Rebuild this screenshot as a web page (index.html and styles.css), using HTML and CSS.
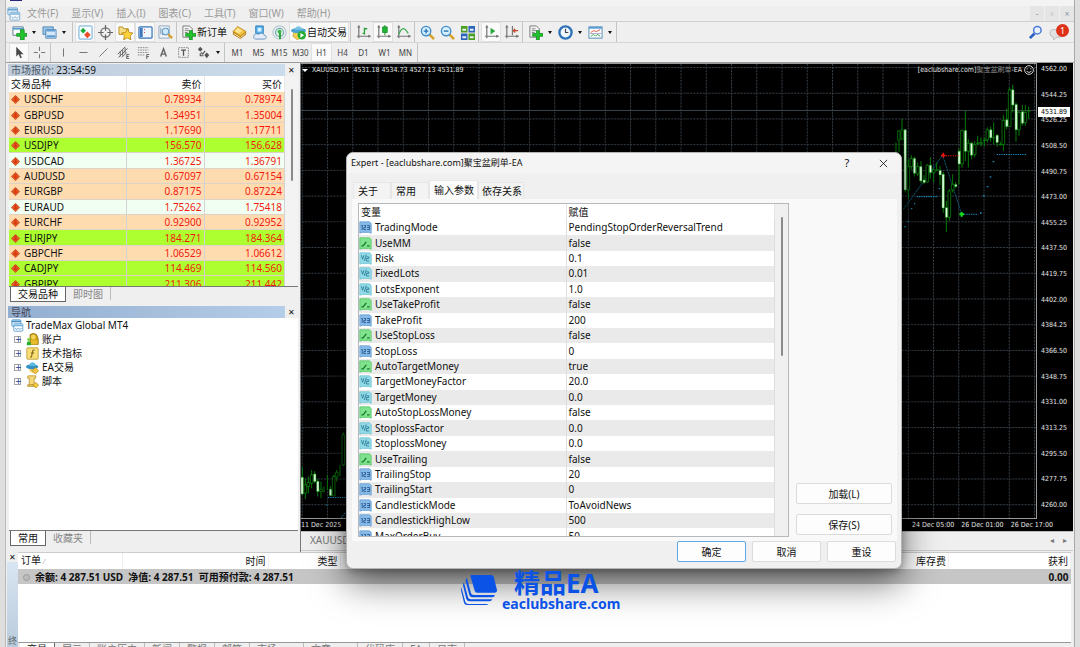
FILE: index.html
```html
<!DOCTYPE html>
<html lang="zh-CN">
<head>
<meta charset="utf-8">
<title>TradeMax Global MT4</title>
<link rel="stylesheet" href="styles.css">
</head>
<body>
<svg class="defs" aria-hidden="true">
  <defs>
    <symbol id="i-app" viewBox="0 0 16 16"><rect x="1" y="1" width="11" height="8" rx="1" fill="#dff0fb" stroke="#4a90c8"/><path d="M1 3h11" stroke="#4a90c8" stroke-width="2"/><rect x="3.500" y="6" width="11" height="9" rx="1" fill="#fff" stroke="#4a90c8"/><path d="M4 8h10" stroke="#6db3e4" stroke-width="2"/><path d="M5 11l2 2 2-2 2 2 2-2" stroke="#4a90c8" fill="none"/></symbol>
    <symbol id="i-newchart" viewBox="0 0 16 16"><path d="M1 2h11v9H1z" fill="#fff" stroke="#5a7d96"/><path d="M1 4h11" stroke="#5b9fd0" stroke-width="2"/><path d="M9 5h4v4h3v3h-3v4H9v-4H5V9h4z" fill="#22c42e" stroke="#128a1c" stroke-width=".8"/></symbol>
    <symbol id="i-windows" viewBox="0 0 16 16"><path d="M1 2h11v8H1z" fill="#9cc6e8" stroke="#4f88b5"/><path d="M4 5h11v9H4z" fill="#d5e8f7" stroke="#4f88b5"/><path d="M5 12h9M5 6h9" stroke="#5e9bd0" stroke-width="2"/></symbol>
    <symbol id="i-market" viewBox="0 0 16 16"><rect x="1" y="1" width="14" height="14" rx="1" fill="#f5fbff" stroke="#64a7d5"/><path d="M5.500 3l3 3-3 3-3-3z" fill="#1bab38"/><path d="M10 7l3.500 3.500L10 14l-3.500-3.500z" fill="#ec4c26"/></symbol>
    <symbol id="i-cross" viewBox="0 0 16 16"><circle cx="8" cy="8" r="5" fill="none" stroke="#666" stroke-width="1.300"/><path d="M8 0v6M8 10v6M0 8h6M10 8h6" stroke="#666" stroke-width="1.300"/></symbol>
    <symbol id="i-star" viewBox="0 0 16 16"><path d="M1 2h4l1 2h5v6H1z" fill="#f6dd85" stroke="#b48d25"/><path d="M10 4l2 4 4 .5-3 3 .8 4.300L10 13.700l-4 2 .8-4.200-3-3L8 8z" fill="#ffd23a" stroke="#a9790d" stroke-width=".8"/></symbol>
    <symbol id="i-panel" viewBox="0 0 16 16"><rect x="1" y="2" width="14" height="12" rx="1" fill="#eef6ff" stroke="#3975b5" stroke-width="1.300"/><path d="M2 3h3v10H2z" fill="#3c78bb"/><path d="M6.500 5h1M6.500 8h1" stroke="#c33"/></symbol>
    <symbol id="i-tester" viewBox="0 0 16 16"><path d="M1 1h11v13H1z" fill="#eef3f8" stroke="#90a8bc"/><path d="M3 3v7M5 5v6M10 3v6" stroke="#7a99b5"/><circle cx="8" cy="7" r="3.500" fill="#cfe8fa" stroke="#699dc6" stroke-width="1.200"/><path d="M11 10l4 4" stroke="#d79f2b" stroke-width="2.500"/></symbol>
    <symbol id="i-order" viewBox="0 0 16 16"><path d="M2 1h7l3 3v9H2z" fill="#f3f3f3" stroke="#777"/><path d="M4 4h4M4 6h5M4 8h3" stroke="#888"/><path d="M9 6h3v3h4v3h-4v4H9v-4H5V9h4z" fill="#22c42e" stroke="#128a1c" stroke-width=".8"/></symbol>
    <symbol id="i-meta" viewBox="0 0 16 16"><path d="M6 2l9 5v3l-6 5-8-5V7z" fill="#b97a10"/><path d="M6 1.500L15 7l-6 5-8-5z" fill="#f3c241" stroke="#a4700c" stroke-width=".6"/><path d="M6 3l5 3-4 3-4-2.500z" fill="#ffe492"/><path d="M2 9l7 4.500L14 9" fill="none" stroke="#fff2b8"/></symbol>
    <symbol id="i-signal" viewBox="0 0 16 16"><path d="M4 1h8v8H4z" fill="#58b4ee" stroke="#267db8"/><path d="M6 3h4v4H6z" fill="#d9f0fd"/><path d="M2 12c0-3 4-3 5-2 2-2 6-1 6 1 3 0 3 4 0 4H4c-2 0-3-2-2-3z" fill="#e3edf8" stroke="#6c93c4"/></symbol>
    <symbol id="i-radio" viewBox="0 0 16 16"><circle cx="8" cy="8" r="7" fill="none" stroke="#b7ccd4" stroke-width="1.300"/><circle cx="8" cy="8" r="4.300" fill="#d9efdc" stroke="#7bacb9" stroke-width="1.300"/><path d="M8.500 7v8" stroke="#2a9d3a" stroke-width="2"/><circle cx="8" cy="7" r="2" fill="#3ab44a"/></symbol>
    <symbol id="i-auto" viewBox="0 0 16 16"><path d="M3 7l9-1 1 5-6 5-5-4z" fill="#f4cd52" stroke="#b48a1e" stroke-width=".6"/><ellipse cx="8" cy="6" rx="8" ry="2.800" fill="#4aa3d0"/><path d="M4 5c0-5 8-5 8 0z" fill="#79c5e6"/><circle cx="11.500" cy="11" r="4.500" fill="#27ad35"/><path d="M10 8.500v5l4-2.500z" fill="#fff"/></symbol>
    <symbol id="i-ea" viewBox="0 0 16 16"><path d="M4 8h8v4l-4 3-4-3z" fill="#f1ce68"/><ellipse cx="7.500" cy="7" rx="7.500" ry="3" fill="#348fc2"/><path d="M4 6c0-6 8-6 8 0z" fill="#5bb9e2"/><path d="M11.500 8l4 4-4 4-4-4z" fill="#f2c63e" stroke="#a98016" stroke-width=".8"/></symbol>
    <symbol id="i-bars" viewBox="0 0 16 16"><path d="M3 1v13M1 12h14M2 3l1-2 1 2M13 11l2 1-2 1" fill="none" stroke="#777" stroke-width="1.300"/><path d="M9 3v7M9 4h3M7 9h2" stroke="#27a33a" stroke-width="1.400"/></symbol>
    <symbol id="i-candles" viewBox="0 0 16 16"><path d="M3 1v13M1 12h14M2 3l1-2 1 2M13 11l2 1-2 1" fill="none" stroke="#777" stroke-width="1.300"/><path d="M9.500 0v11" stroke="#128a25"/><path d="M7 2h5v6H7z" fill="#1fb632" stroke="#128a25" stroke-width=".8"/></symbol>
    <symbol id="i-line" viewBox="0 0 16 16"><path d="M3 1v13M1 12h14M2 3l1-2 1 2M13 11l2 1-2 1" fill="none" stroke="#777" stroke-width="1.300"/><path d="M3 10c3-8 6-8 10-1" fill="none" stroke="#41ad51" stroke-width="1.400"/></symbol>
    <symbol id="i-zoomin" viewBox="0 0 16 16"><path d="M10 10l5 5" stroke="#d5a32c" stroke-width="2.800"/><circle cx="6.500" cy="6.500" r="5" fill="#d7efff" stroke="#3f8dcd" stroke-width="1.500"/><path d="M4 6.500h5M6.500 4v5" stroke="#2877bb" stroke-width="1.500"/></symbol>
    <symbol id="i-zoomout" viewBox="0 0 16 16"><path d="M10 10l5 5" stroke="#d5a32c" stroke-width="2.800"/><circle cx="6.500" cy="6.500" r="5" fill="#d7efff" stroke="#3f8dcd" stroke-width="1.500"/><path d="M4 6.500h5" stroke="#2877bb" stroke-width="1.500"/></symbol>
    <symbol id="i-tile" viewBox="0 0 16 16"><path d="M1 1h7v7H1zM9 9h7v7H9z" fill="#4c9e20"/><path d="M9 1h7v7H9zM1 9h7v7H1z" fill="#2e64ba"/><path d="M2.500 4h4v2h-4zM10.500 4h4v2h-4zM2.500 12h4v2h-4zM10.500 12h4v2h-4z" fill="#e7f1f8"/></symbol>
    <symbol id="i-scroll" viewBox="0 0 16 16"><path d="M3 1v13M1 12h14M2 3l1-2 1 2M13 11l2 1-2 1" fill="none" stroke="#777" stroke-width="1.300"/><path d="M7 3v7l5-3.500z" fill="#28a83b"/></symbol>
    <symbol id="i-shift" viewBox="0 0 16 16"><path d="M3 1v13M1 12h14M2 3l1-2 1 2M13 11l2 1-2 1M9 1v10" fill="none" stroke="#777" stroke-width="1.300"/><path d="M15 6h-5M12 4l-2 2 2 2" fill="none" stroke="#c6482a" stroke-width="1.300"/></symbol>
    <symbol id="i-clock" viewBox="0 0 16 16"><circle cx="8" cy="8" r="6.500" fill="#edf6fd" stroke="#2d72b8" stroke-width="2.500"/><path d="M8 4v4h3" fill="none" stroke="#444" stroke-width="1.200"/></symbol>
    <symbol id="i-template" viewBox="0 0 16 16"><rect x="1" y="2" width="14" height="12" fill="#fff" stroke="#5087b6"/><path d="M1 3h14" stroke="#5d9fd6" stroke-width="2"/><path d="M3 8l3-2 3 1 4-2" fill="none" stroke="#d05442"/><path d="M3 12l3-2 2 2 2-2 3 2" fill="none" stroke="#38a04a"/><path d="M2 9h12" stroke="#aac"/></symbol>
    <symbol id="i-pointer" viewBox="0 0 16 16"><path d="M4 1v12l3-3 2 5 2-1-2-4h4z" fill="#4a4a4a"/></symbol>
    <symbol id="i-plus" viewBox="0 0 16 16"><path d="M8 1v5M8 10v5M1 8h5M10 8h5" stroke="#777" stroke-width="1.300"/></symbol>
    <symbol id="i-vline" viewBox="0 0 16 16"><path d="M8 3v10" stroke="#777" stroke-width="1.300"/></symbol>
    <symbol id="i-hline" viewBox="0 0 16 16"><path d="M3 8h10" stroke="#777" stroke-width="1.300"/></symbol>
    <symbol id="i-trend" viewBox="0 0 16 16"><path d="M3 13L13 3" stroke="#777" stroke-width="1.200"/></symbol>
    <symbol id="i-channel" viewBox="0 0 16 16"><path d="M1 10L10 1M2 14L13 3M6 14l6-6M4 6v7M7 4v8M10 2v7" fill="none" stroke="#666" stroke-width="1.200"/><path d="M15 10.500h-3v5h3M12 13h2.500" fill="none" stroke="#444"/></symbol>
    <symbol id="i-fibo" viewBox="0 0 16 16"><path d="M1 2h13M1 5h13M1 8h13M1 11h9" stroke="#777" stroke-dasharray="2 1"/><path d="M15 10.500h-3V16M12 13h2.500" fill="none" stroke="#444"/></symbol>
    <symbol id="i-text" viewBox="0 0 16 16"><path d="M4.500 13L8 3.500 11.500 13M5.700 10h4.600" fill="none" stroke="#666" stroke-width="1.800"/></symbol>
    <symbol id="i-label" viewBox="0 0 16 16"><rect x="2" y="2" width="12" height="12" fill="none" stroke="#777" stroke-dasharray="2 1"/><path d="M5 5h6M8 5v7" stroke="#555" stroke-width="1.600"/></symbol>
    <symbol id="i-arrows" viewBox="0 0 16 16"><path d="M1 4l3-3 3 3-3 3zM9 11l3-3 3 3-3 4z" fill="#555"/><path d="M5 8l2 2 3-4M4 9v3h4" fill="none" stroke="#555" stroke-width="1.400"/></symbol>
    <symbol id="i-down" viewBox="0 0 16 16"><path d="M8 0l8 8-8 8-8-8z" fill="#c9501f"/><path d="M8 2l6 6-6 6-6-6z" fill="#ee6a35"/><path d="M6 3h4v5h3l-5 5-5-5h3z" fill="#d93a10"/></symbol>
    <symbol id="i-accounts" viewBox="0 0 16 16"><path d="M5 2q4-3 8 0l2 5v7H5z" fill="#d4a514" stroke="#8b6b0c"/><circle cx="9" cy="5" r="3" fill="#f4d55c"/><path d="M6 14V9h8v5z" fill="#e6bd30"/><circle cx="3.500" cy="8" r="2" fill="#73cf3d"/><path d="M1 15v-3q2-4 5 0v3z" fill="#28ae29"/></symbol>
    <symbol id="i-func" viewBox="0 0 16 16"><rect x="1" y="1" width="14" height="14" rx="1" fill="#f8df76" stroke="#b79531"/><path d="M10.500 4q-2-1-2.500 2l-1 5q0 2-2 1M6 7.500h4" fill="none" stroke="#806214" stroke-width="1.300"/></symbol>
    <symbol id="i-script" viewBox="0 0 16 16"><path d="M2 2q0-1 1-1h9v3h-2v8H4V4H2z" fill="#f5d878" stroke="#b79437"/><path d="M2 12h9v2H2z" fill="#e9c456" stroke="#b79437"/><path d="M12 9l3.500 3.500L12 16l-3.500-3.500z" fill="#f3ca3a" stroke="#a98016" stroke-width=".8"/></symbol>
    <symbol id="i-int" viewBox="0 0 16 16"><path d="M1 1h12l2 2v12l-3-1H4l-3 1z" fill="#86bbe9" stroke="#6a9fd0"/><path d="M3 6l1-1v6M6 5.500h2V8H6v2.500h2.500M10 5.500h3v5h-3M10 8h3" fill="none" stroke="#2f5f95" stroke-width="1.200"/></symbol>
    <symbol id="i-bool" viewBox="0 0 16 16"><path d="M1 1h12l2 2v12l-3-1H4l-3 1z" fill="#7fe28c" stroke="#5cc66b"/><path d="M3 11h2l4-5M10 11h3" fill="none" stroke="#167329" stroke-width="1.500"/></symbol>
    <symbol id="i-dbl" viewBox="0 0 16 16"><path d="M1 1h12l2 2v12l-3-1H4l-3 1z" fill="#93dbe8" stroke="#74c3d2"/><path d="M3 4l1.500 5L6 4M9 3L6.500 11M9 6h3v2H9v3h3.500" fill="none" stroke="#2c7e96" stroke-width="1.100"/></symbol>
  </defs>
</svg>

<div class="app">
  <div class="titlebar"><span class="title-mark"></span></div>
  <nav class="menubar">
    <svg class="ic menu-logo"><use href="#i-app"/></svg>
    <button>文件(F)</button><button>显示(V)</button><button>插入(I)</button><button>图表(C)</button><button>工具(T)</button><button>窗口(W)</button><button>帮助(H)</button>
    <div class="mdi"><button aria-label="最小化">-</button><button aria-label="还原">▫</button><button aria-label="关闭">×</button></div>
  </nav>

  <div class="tools">
    <div class="toolbar">
      <div class="group first">
        <button class="tb"><svg class="ic"><use href="#i-newchart"/></svg></button><button class="dd" aria-label="更多"></button>
        <button class="tb"><svg class="ic"><use href="#i-windows"/></svg></button><button class="dd" aria-label="更多"></button>
      </div>
      <div class="group">
        <button class="tb on"><svg class="ic"><use href="#i-market"/></svg></button>
        <button class="tb"><svg class="ic"><use href="#i-cross"/></svg></button>
        <button class="tb on"><svg class="ic"><use href="#i-star"/></svg></button>
        <button class="tb on"><svg class="ic"><use href="#i-panel"/></svg></button>
        <button class="tb"><svg class="ic"><use href="#i-tester"/></svg></button>
      </div>
      <div class="group">
        <button class="tb wide"><svg class="ic"><use href="#i-order"/></svg>新订单</button>
        <button class="tb"><svg class="ic"><use href="#i-meta"/></svg></button>
        <button class="tb"><svg class="ic"><use href="#i-signal"/></svg></button>
        <button class="tb"><svg class="ic"><use href="#i-radio"/></svg></button>
        <button class="tb wide on"><svg class="ic"><use href="#i-auto"/></svg>自动交易</button>
      </div>
      <div class="group">
        <button class="tb"><svg class="ic"><use href="#i-bars"/></svg></button>
        <button class="tb on"><svg class="ic"><use href="#i-candles"/></svg></button>
        <button class="tb"><svg class="ic"><use href="#i-line"/></svg></button>
      </div>
      <div class="group">
        <button class="tb"><svg class="ic"><use href="#i-zoomin"/></svg></button>
        <button class="tb"><svg class="ic"><use href="#i-zoomout"/></svg></button>
        <button class="tb"><svg class="ic"><use href="#i-tile"/></svg></button>
      </div>
      <div class="group">
        <button class="tb on"><svg class="ic"><use href="#i-scroll"/></svg></button>
        <button class="tb"><svg class="ic"><use href="#i-shift"/></svg></button>
      </div>
      <div class="group last">
        <button class="tb"><svg class="ic"><use href="#i-order"/></svg></button><button class="dd" aria-label="更多"></button>
        <button class="tb"><svg class="ic"><use href="#i-clock"/></svg></button><button class="dd" aria-label="更多"></button>
        <button class="tb"><svg class="ic"><use href="#i-template"/></svg></button><button class="dd" aria-label="更多"></button>
      </div>
      <div class="right-tools">
        <button class="tb" aria-label="搜索"><svg class="ic" viewBox="0 0 16 16"><path d="M7 9l-5 5" stroke="#2e5fc4" stroke-width="3"/><circle cx="10" cy="5.500" r="4" fill="#eaf3ff" stroke="#4c7cd6" stroke-width="1.600"/></svg></button>
        <button class="tb bell" aria-label="通知"><svg class="ic" viewBox="0 0 16 16"><path d="M3 5h9q3 0 3 4t-4 4H8l-3 3v-3q-4-1-4-4t2-4z" fill="#e2e2e2" stroke="#bbb"/></svg><span class="badge">1</span></button>
      </div>
    </div>
    <div class="toolbar second">
      <div class="group">
        <button class="tb on"><svg class="ic"><use href="#i-pointer"/></svg></button>
        <button class="tb"><svg class="ic"><use href="#i-plus"/></svg></button>
      </div>
      <div class="group">
        <button class="tb"><svg class="ic"><use href="#i-vline"/></svg></button>
        <button class="tb"><svg class="ic"><use href="#i-hline"/></svg></button>
        <button class="tb"><svg class="ic"><use href="#i-trend"/></svg></button>
        <button class="tb"><svg class="ic"><use href="#i-channel"/></svg></button>
        <button class="tb"><svg class="ic"><use href="#i-fibo"/></svg></button>
        <button class="tb"><svg class="ic"><use href="#i-text"/></svg></button>
        <button class="tb"><svg class="ic"><use href="#i-label"/></svg></button>
        <button class="tb"><svg class="ic"><use href="#i-arrows"/></svg></button><button class="dd" aria-label="更多"></button>
      </div>
      <div class="group periods">
        <button class="tb">M1</button><button class="tb">M5</button><button class="tb">M15</button><button class="tb">M30</button><button class="tb on">H1</button><button class="tb">H4</button><button class="tb">D1</button><button class="tb">W1</button><button class="tb">MN</button>
      </div>
    </div>
  </div>

  <main class="work">
    <aside class="side">
      <section class="market">
        <header class="pane-head"><span>市场报价: <b>23:54:59</b></span><button aria-label="关闭">✕</button></header>
        <div class="market-body">
          <table class="quotes">
            <colgroup><col class="q-name"><col class="q-sell"><col></colgroup>
            <thead><tr><th>交易品种</th><th>卖价</th><th>买价</th></tr></thead>
            <tbody>
              <tr><td><svg class="arr"><use href="#i-down"/></svg>USDCHF</td><td>0.78934</td><td>0.78974</td></tr>
              <tr><td><svg class="arr"><use href="#i-down"/></svg>GBPUSD</td><td>1.34951</td><td>1.35004</td></tr>
              <tr><td><svg class="arr"><use href="#i-down"/></svg>EURUSD</td><td>1.17690</td><td>1.17711</td></tr>
              <tr class="lime"><td><svg class="arr"><use href="#i-down"/></svg>USDJPY</td><td>156.570</td><td>156.628</td></tr>
              <tr class="mint"><td><svg class="arr"><use href="#i-down"/></svg>USDCAD</td><td>1.36725</td><td>1.36791</td></tr>
              <tr><td><svg class="arr"><use href="#i-down"/></svg>AUDUSD</td><td>0.67097</td><td>0.67154</td></tr>
              <tr><td><svg class="arr"><use href="#i-down"/></svg>EURGBP</td><td>0.87175</td><td>0.87224</td></tr>
              <tr class="mint"><td><svg class="arr"><use href="#i-down"/></svg>EURAUD</td><td>1.75262</td><td>1.75418</td></tr>
              <tr><td><svg class="arr"><use href="#i-down"/></svg>EURCHF</td><td>0.92900</td><td>0.92952</td></tr>
              <tr class="lime"><td><svg class="arr"><use href="#i-down"/></svg>EURJPY</td><td>184.271</td><td>184.364</td></tr>
              <tr><td><svg class="arr"><use href="#i-down"/></svg>GBPCHF</td><td>1.06529</td><td>1.06612</td></tr>
              <tr class="lime"><td><svg class="arr"><use href="#i-down"/></svg>CADJPY</td><td>114.469</td><td>114.560</td></tr>
              <tr class="lime"><td><svg class="arr"><use href="#i-down"/></svg>GBPJPY</td><td>211.306</td><td>211.442</td></tr>
            </tbody>
          </table>
          <div class="thumb-track"><i class="thumb"></i></div>
        </div>
        <div class="tabs"><button class="active">交易品种</button><button>即时图</button></div>
      </section>
      <section class="navigator">
        <header class="pane-head deep"><span>导航</span><button aria-label="关闭">✕</button></header>
        <div class="tree">
          <div class="node root"><svg class="ic"><use href="#i-app"/></svg>TradeMax Global MT4</div>
          <div class="node"><i class="exp">+</i><svg class="ic"><use href="#i-accounts"/></svg>账户</div>
          <div class="node"><i class="exp">+</i><svg class="ic"><use href="#i-func"/></svg>技术指标</div>
          <div class="node"><i class="exp">+</i><svg class="ic"><use href="#i-ea"/></svg>EA交易</div>
          <div class="node"><i class="exp">+</i><svg class="ic"><use href="#i-script"/></svg>脚本</div>
        </div>
        <div class="tabs"><button class="active">常用</button><button>收藏夹</button></div>
      </section>
    </aside>

    <section class="chart-pane">
      <div class="chart">
        <div class="plot">
          <svg class="plot-svg" viewBox="301 65 735 453" preserveAspectRatio="none">
            <defs>
              <pattern id="grid" patternUnits="userSpaceOnUse" x="327" y="68" width="25.250" height="25.660">
                <path d="M.5 0V25.660M0 .5H25.250" stroke="#39434c" stroke-width="1" stroke-dasharray="2 1.200" fill="none"/>
              </pattern>
            </defs>
            <rect x="301" y="64" width="738" height="456" fill="url(#grid)"/>
            <path d="M301 111.500h738" stroke="#36444a"/>
            <g transform="translate(890 60) scale(.33333)" stroke-width="3" fill="none">
              <path d="M40 450L158 288L215 465" stroke="#0d5064" stroke-width="3" stroke-dasharray="7 2"/>
              <path stroke="#067d08" d="M18 250v30M27 215v65M36 180v60M46 210v190M55 300v118M64 288v42M73 292v60M83 310v40M93 305v66M102 348v27M112 315v55M121 294v64M131 328v42M140 310v26M150 320v58M160 338v122M169 425v93M178 390v95M188 345v55M197 368v18M207 268v107M216 212v113M226 155v150M235 240v85M245 248v52M254 246v48M263 230v28M273 235v27M283 235v27M292 205v45M302 203v44M311 190v65M321 225v38M331 248v12M340 168v107M350 148v62M359 85v117M368 77v83M378 130v118M387 155v75M397 138v62M406 138v62M416 142v36M411 156h10M136 332h10M258 252h10M279 244h10M306 236h10M326 256h10"/>
              <path fill="#000" stroke="#079b0c" stroke-width="2" d="M23 215h7v28h-7zM33 212h7v28h-7zM51 322h8v70h-8zM60 298h8v24h-8zM79 322h8v22h-8zM108 318h8v50h-8zM127 332h8v8h-8zM174 395h8v79h-8zM184 375h8v17h-8zM212 214h8v100h-8zM231 252h8v24h-8zM250 256h8v30h-8zM269 250h8v4h-8zM288 212h8v30h-8zM336 184h8v72h-8zM355 92h8v110h-8zM383 160h8v52h-8zM402 160h8v30h-8z"/>
              <path fill="#e3ffe3" stroke="#0c970e" stroke-width="1.500" d="M42 212h7v180h-7zM70 298h7v44h-7zM89 322h7v43h-7zM99 362h7v8h-7zM118 318h7v22h-7zM147 334h7v13h-7zM156 345h7v101h-7zM166 445h7v29h-7zM194 376h7v6h-7zM204 276h7v38h-7zM223 214h7v62h-7zM241 252h7v36h-7zM299 212h7v24h-7zM318 228h7v22h-7zM347 182h7v20h-7zM365 92h7v46h-7zM375 136h7v76h-7zM394 158h7v34h-7z"/>
              <path d="M160 290h48" stroke="#e01010" stroke-dasharray="4 3"/>
              <path d="M160 281v14M153 289h14" stroke="#f01212" stroke-width="5"/>
              <path d="M80 412h64M215 465h50M320 286h88" stroke="#168dbb" stroke-dasharray="4 3"/>
              <path d="M43 502h5M53 486h4M63 448h4M72 433h4M146 388h4M270 461h5M279 409h5M290 382h5M299 353h5M308 307h5" stroke="#168dbb" stroke-width="4"/>
              <path d="M215 458v14M208 465h14" stroke="#11e21b" stroke-width="6"/>
            </g>
            <g transform="translate(300 420) scale(.33333)" stroke-width="3" fill="none">
              <path stroke="#067d08" d="M7 142v83M16 175v62M25 170v50M35 150v55M44 153v37M53 178v52M63 185v50M72 200v18M82 165v45M91 198v30M101 165v63M110 150v35M120 135v35M130 38v100"/>
              <path fill="#000" stroke="#079b0c" stroke-width="2" d="M12 195h8v25h-8zM21 188h8v12h-8zM31 165h8v25h-8zM59 208h8v7h-8zM97 170h8v58h-8zM106 157h8v14h-8zM126 45h8v90h-8z"/>
              <path fill="#e3ffe3" stroke="#0c970e" stroke-width="1.500" d="M3 172h7v50H3zM41 162h7v23h-7zM50 184h7v31h-7zM88 208h7v19h-7z"/>
              <path d="M84 233h54M78 255h6M124 294l12-18" stroke="#168dbb" stroke-dasharray="4 3"/>
            </g>
          </svg>
          <div class="plot-head"><span class="symbol">XAUUSD,H1&nbsp; 4531.18 4534.73 4527.13 4531.89</span><span class="expert-name">[eaclubshare.com]<span class="dim">聚宝盆刷单</span>-EA <svg class="smile" viewBox="0 0 16 16"><circle cx="8" cy="8" r="7" fill="none" stroke="#ddd" stroke-width="1.500"/><path d="M5 5v2M11 5v2M4 10q4 4 8 0" fill="none" stroke="#ddd" stroke-width="1.500"/></svg></span></div>
        </div>
        <div class="prices">
          <span>4562.00</span><span>4544.25</span><span>4526.25</span><span>4508.50</span><span>4490.75</span><span>4473.00</span><span>4455.25</span><span>4437.50</span><span>4419.75</span><span>4402.00</span><span>4384.25</span><span>4366.50</span><span>4348.75</span><span>4331.00</span><span>4313.25</span><span>4295.50</span><span>4277.75</span><span>4260.00</span>
          <b class="price-now">4531.89</b>
        </div>
        <div class="dates"><span>11 Dec 2025</span><span class="push">24 Dec 05:00</span><span>26 Dec 01:00</span><span>26 Dec 17:00</span></div>
      </div>
      <div class="chart-tabs"><button>XAUUSD,H1</button><span class="scroll-arrows"><i>◂</i><i>▸</i></span></div>
    </section>
  </main>

  <section class="terminal">
    <div class="term-strip"><button aria-label="关闭">✕</button><span>终端</span></div>
    <div class="term-main">
      <table class="orders">
        <colgroup><col class="o-id"><col class="o-time"><col class="o-type"><col><col class="o-swap"><col class="o-profit"></colgroup>
        <thead><tr><th class="l">订单 <small>⁄</small></th><th>时间</th><th>类型</th><th></th><th>库存费</th><th>获利</th></tr></thead>
        <tbody><tr><td colspan="5" class="l"><i class="dot"></i>余额: 4 287.51 USD&nbsp; 净值: 4 287.51&nbsp; 可用预付款: 4 287.51</td><td>0.00</td></tr></tbody>
      </table>
      <div class="term-tabs"><button class="active">交易</button><button>展示</button><button>账户历史</button><button>新闻</button><button>警报</button><button>邮箱</button><button class="counted">市场</button><button class="counted">文章</button><button>代码库</button><button>EA</button><button>日志</button></div>
    </div>
  </section>
</div>

<div class="watermark">
  <svg class="wm-logo" viewBox="0 0 108 90"><path d="M30 0h61q5 0 7 5l10 40q1 6-6 8H48q-5 0-7-6L29 5q-1-5 1-5z"/><path d="M18 10l12 45q2 5 8 5h64q-2 7-8 7H34q-7 0-9-7L14 18q-1-7 4-8z"/><path d="M9 23l12 44q2 6 8 6h65q-3 6-8 6H26q-8 0-10-7L6 31q-1-6 3-8z"/><path d="M1 37l12 44q3 6 9 6h60q-2 3-7 3H18q-7 0-9-7L0 46z"/></svg>
  <div class="wm-text"><strong>精品EA</strong><span>eaclubshare.com</span></div>
</div>

<div class="dialog" role="dialog" aria-label="Expert">
  <header class="dlg-head"><span>Expert - [eaclubshare.com]聚宝盆刷单-EA</span><button aria-label="帮助">?</button><button aria-label="关闭"><svg class="x" viewBox="0 0 10 10"><path d="M1 1l8 8M9 1L1 9" stroke="#222" stroke-width="1"/></svg></button></header>
  <div class="dlg-tabs"><button>关于</button><button>常用</button><button class="active">输入参数</button><button>依存关系</button></div>
  <div class="dlg-page">
    <div class="params-box">
      <table class="params">
        <colgroup><col class="p-name"><col></colgroup>
        <thead><tr><th>变量</th><th>赋值</th></tr></thead>
        <tbody>
          <tr><td><svg class="ty"><use href="#i-int"/></svg>TradingMode</td><td>PendingStopOrderReversalTrend</td></tr>
          <tr><td><svg class="ty"><use href="#i-bool"/></svg>UseMM</td><td>false</td></tr>
          <tr><td><svg class="ty"><use href="#i-dbl"/></svg>Risk</td><td>0.1</td></tr>
          <tr><td><svg class="ty"><use href="#i-dbl"/></svg>FixedLots</td><td>0.01</td></tr>
          <tr><td><svg class="ty"><use href="#i-dbl"/></svg>LotsExponent</td><td>1.0</td></tr>
          <tr><td><svg class="ty"><use href="#i-bool"/></svg>UseTakeProfit</td><td>false</td></tr>
          <tr><td><svg class="ty"><use href="#i-int"/></svg>TakeProfit</td><td>200</td></tr>
          <tr><td><svg class="ty"><use href="#i-bool"/></svg>UseStopLoss</td><td>false</td></tr>
          <tr><td><svg class="ty"><use href="#i-int"/></svg>StopLoss</td><td>0</td></tr>
          <tr><td><svg class="ty"><use href="#i-bool"/></svg>AutoTargetMoney</td><td>true</td></tr>
          <tr><td><svg class="ty"><use href="#i-dbl"/></svg>TargetMoneyFactor</td><td>20.0</td></tr>
          <tr><td><svg class="ty"><use href="#i-dbl"/></svg>TargetMoney</td><td>0.0</td></tr>
          <tr><td><svg class="ty"><use href="#i-bool"/></svg>AutoStopLossMoney</td><td>false</td></tr>
          <tr><td><svg class="ty"><use href="#i-dbl"/></svg>StoplossFactor</td><td>0.0</td></tr>
          <tr><td><svg class="ty"><use href="#i-dbl"/></svg>StoplossMoney</td><td>0.0</td></tr>
          <tr><td><svg class="ty"><use href="#i-bool"/></svg>UseTrailing</td><td>false</td></tr>
          <tr><td><svg class="ty"><use href="#i-int"/></svg>TrailingStop</td><td>20</td></tr>
          <tr><td><svg class="ty"><use href="#i-int"/></svg>TrailingStart</td><td>0</td></tr>
          <tr><td><svg class="ty"><use href="#i-int"/></svg>CandlestickMode</td><td>ToAvoidNews</td></tr>
          <tr><td><svg class="ty"><use href="#i-int"/></svg>CandlestickHighLow</td><td>500</td></tr>
          <tr><td><svg class="ty"><use href="#i-int"/></svg>MaxOrderBuy</td><td>50</td></tr>
        </tbody>
      </table>
      <div class="thumb-track grey"><i class="thumb long"></i></div>
    </div>
    <div class="dlg-side"><button class="btn">加载(L)</button><button class="btn">保存(S)</button></div>
  </div>
  <footer class="dlg-foot"><button class="btn primary">确定</button><button class="btn">取消</button><button class="btn">重设</button></footer>
</div>
</body>
</html>
```

FILE: styles.css
```css
* { box-sizing: border-box; }
html, body { height: 100%; }
body {
  margin: 0;
  overflow: hidden;
  background: #dedede;
  font: 10px/14px "Noto Sans", "Noto Sans CJK SC", sans-serif;
  color: #111;
}
button {
  font: inherit;
  color: inherit;
  background: none;
  border: 0;
  padding: 0;
  white-space: nowrap;
}
table { border-collapse: collapse; table-layout: fixed; }
th { font-weight: 400; }
th, td { padding: 0; line-height: 14px; white-space: nowrap; }
.defs { position: absolute; width: 0; height: 0; }
.ic { width: 15px; height: 15px; flex: none; display: block; }

.app {
  height: 100%;
  margin: 0 5px 0 5px;
  border-left: 1px solid #b9b9b9;
  border-right: 1px solid #a8a8a8;
  background: #efefef;
  display: grid;
  grid-template-rows: 6px 15px 42px minmax(0, 1fr) 95px;
}
.titlebar { background: #f3f3f3; padding-left: 4px; }
.title-mark { display: block; width: 12px; height: 1px; background: #26267a; }

.menubar { display: flex; align-items: center; padding-left: 1px; color: #9a9a9a; line-height: 15px; }
.menu-logo { width: 14px; height: 14px; opacity: .8; margin-right: 6px; }
.menubar > button { margin-right: 13px; }
.mdi { margin-left: auto; display: flex; gap: 1px; align-self: stretch; font-size: 8px; color: #8a96a5; }
.mdi button { width: 14px; background: #e5e5e5; }

.tools { border-top: 1px solid #cfcfcf; border-bottom: 1px solid #9b9b9b; background: #efefef; }
.toolbar { display: flex; height: 20px; padding-left: 2px; }
.second { border-top: 1px solid #d6d6d6; }
.group { display: flex; align-items: stretch; border-right: 1px solid #c4c4c4; padding: 0 1px; margin-right: 1px; }
.group.first { padding: 0 3px 0 1px; }
.tb { width: 20px; display: flex; align-items: center; justify-content: center; }
.tb.on { background: #fafafa; box-shadow: inset 0 0 0 1px #e0e0e0; }
.tb.wide { width: auto; padding: 0 2px; gap: 1px; }
.dd { width: 10px; display: flex; align-items: center; justify-content: center; }
.dd::after { content: ""; border: 2px solid transparent; border-top: 3px solid #111; border-bottom: 0; }
.right-tools { margin-left: auto; display: flex; gap: 1px; padding-right: 8px; }
.bell { position: relative; }
.badge {
  position: absolute; left: 10px; top: 2px;
  width: 13px; height: 13px; border-radius: 50%;
  background: #dd3217; color: #fff; font-size: 9px; line-height: 13px; text-align: center;
}
.periods { font-size: 8px; color: #444; }
.periods .tb { width: 21px; }
.second .ic { width: 13px; height: 13px; }

.work { display: grid; grid-template-columns: 294px minmax(0, 1fr); min-height: 0; }
.side { display: flex; flex-direction: column; min-height: 0; padding: 1px 2px 6px 2px; }
.market, .navigator { display: flex; flex-direction: column; min-height: 0; }
.market { flex: none; margin-bottom: 4px; }
.navigator { flex: 1; }
.pane-head { display: flex; height: 12px; line-height: 12px; color: #4a5a6a; }
.pane-head span { flex: 1; padding-left: 3px; background: linear-gradient(90deg, #c0ccda, #cbdcec); overflow: hidden; }
.pane-head.deep span { background: linear-gradient(90deg, #93aecf, #b4cde8); color: #445; }
.pane-head b { font-weight: 400; color: #111; }
.pane-head button { width: 13px; font-size: 8px; color: #111; }
.market-body { display: flex; height: 211px; overflow: hidden; border-bottom: 1px solid #777; background: #fff; margin-left: 1px; }
.quotes { flex: 1; height: 216px; align-self: flex-start; }
.q-name { width: 117px; }
.q-sell { width: 78px; }
.quotes th { text-align: right; padding-right: 2px; height: 16px; border-right: 1px solid #e8e8e8; }
.quotes th:first-child { text-align: left; padding-left: 2px; }
.quotes td { text-align: right; padding-right: 2px; color: #f21a10; background: #ffdcb0; border-right: 1px solid #d3d3d3; border-bottom: 1px solid #dcd2c8; }
.quotes td:first-child { text-align: left; color: #111; padding-left: 2px; }
.quotes .lime td { background: #adff2f; }
.quotes .mint td { background: #f0fff2; }
.arr { width: 9px; height: 9px; margin-right: 4px; vertical-align: -1px; }
.thumb-track { width: 13px; background: #f3f3f3; padding-top: 13px; display: flex; justify-content: center; }
.thumb { width: 2px; height: 92px; background: #8a8a8a; border-radius: 1px; }
.thumb.long { height: 139px; }
.tabs { display: flex; height: 15px; padding-left: 2px; color: #888; }
.tabs button { padding: 0 7px; border-right: 1px solid #bbb; margin-bottom: 2px; }
.tabs .active { color: #111; background: #fff; border: 1px solid #666; border-top: 0; margin-bottom: 0; }
.tree { flex: 1; background: #fff; border-bottom: 1px solid #777; margin: 0 0 0 1px; padding-top: 1px; }
.node { display: flex; align-items: center; gap: 3px; height: 14px; padding-left: 5px; line-height: 13px; }
.node .exp { margin-right: 2px; }
.node.root { padding-left: 2px; gap: 2px; height: 13px; }
.node .ic { width: 13px; height: 13px; }
.exp { width: 7px; height: 7px; border: 1px solid #a5a5a5; background: #fff; font: 8px/5px "DejaVu Sans", sans-serif; text-align: center; color: #223a90; }

.chart-pane { display: flex; flex-direction: column; min-width: 0; margin-right: 1px; border-left: 1px solid #777; }
.chart {
  flex: 1;
  min-height: 0;
  background: #000;
  color: #e4e4e4;
  display: grid;
  grid-template: minmax(0, 1fr) 12px / minmax(0, 1fr) 36px;
  font: 7px/12px "DejaVu Sans Condensed", "DejaVu Sans", "Noto Sans CJK SC", sans-serif;
}
.plot { position: relative; border: 1px solid #999; border-left: 0; min-height: 0; }
.plot-svg { position: absolute; inset: 0; width: 100%; height: 100%; }
.plot-head { position: relative; display: flex; justify-content: space-between; padding: 0 2px 0 1px; }
.symbol { display: flex; align-items: center; gap: 4px; }
.symbol::before { content: ""; border: 3px solid transparent; border-top-color: #fff; border-bottom: 0; }
.expert-name { display: flex; align-items: center; white-space: pre; }
.dim { color: #888; }
.smile { width: 10px; height: 10px; }
.prices { position: relative; display: flex; flex-direction: column; justify-content: space-between; padding-left: 4px; margin-bottom: 8px; }
.price-now { position: absolute; left: 1px; right: 3px; top: 44px; line-height: 10px; background: #fff; color: #000; padding-left: 3px; font-weight: 400; }
.dates { grid-column: 1 / -1; display: flex; gap: 7px; padding-right: 20px; white-space: nowrap; }
.push { margin-left: auto; }
.chart-tabs { height: 20px; display: flex; align-items: flex-start; justify-content: space-between; color: #777; padding: 1px 6px 0 9px; border-bottom: 1px solid #ccc; margin-bottom: 1px; border-top: 1px solid #bbb; }
.scroll-arrows { display: flex; gap: 9px; }
.scroll-arrows i { font-size: 8px; font-style: normal; }

.terminal { display: grid; grid-template-columns: 11px minmax(0, 1fr); margin: 0 3px 0 1px; min-height: 0; overflow: hidden; }
.term-strip { display: flex; flex-direction: column; background: linear-gradient(#dce8f4, #b9cbdc); overflow: hidden; color: #566; }
.term-strip button { font-size: 8px; height: 10px; line-height: 8px; background: #efefef; color: #111; }
.term-strip span { margin-top: auto; writing-mode: vertical-rl; font-size: 9px; line-height: 11px; height: 11px; }
.term-main { display: flex; flex-direction: column; background: #fff; border-top: 1px solid #ccc; min-width: 0; }
.orders { width: 100%; }
.o-id { width: 104px; }
.o-time { width: 146px; }
.o-type { width: 72px; }
.o-swap { width: 80px; }
.o-profit { width: 122px; }
.orders th { height: 14px; text-align: right; border-right: 1px solid #eee; padding-right: 2px; }
.orders td { height: 15px; background: #c6c6c6; font-weight: 700; text-align: right; padding-right: 2px; }
.orders .l { text-align: left; padding-left: 3px; }
.orders small { color: #999; font-size: 7px; }
.dot { display: inline-block; width: 7px; height: 7px; border-radius: 50%; border: 1px solid #999; background: #bbb; margin: 0 5px 0 2px; }
.term-tabs { margin-top: auto; height: 5px; overflow: hidden; display: flex; align-items: flex-start; background: #efefef; border-top: 1px solid #999; color: #777; padding-left: 2px; }
.term-tabs button { flex: none; padding: 0 7px; border-right: 1px solid #bbb; line-height: 12px; }
.term-tabs .counted { padding-right: 26px; }
.term-tabs .active { background: #fff; color: #111; border-right-color: #666; }

.watermark { position: absolute; left: 461px; top: 570px; display: flex; gap: 5px; color: #0a53e6; z-index: 3; }
.wm-logo { width: 36px; height: 30px; margin-top: 5px; fill: #0a53e6; }
.wm-text { display: flex; flex-direction: column; }
.wm-text strong { font: 700 26px/26px "Noto Sans", "Noto Sans CJK SC", sans-serif; padding-left: 12px; }
.wm-text span { font: 700 14px/16px "Noto Sans", sans-serif; }

.dialog {
  position: absolute; left: 346px; top: 152px; width: 556px; z-index: 2;
  background: #f0f0f0;
  border: 1px solid #b5b5b5;
  border-radius: 7px;
  box-shadow: 0 14px 36px rgba(0, 0, 0, .55), 0 2px 8px rgba(0, 0, 0, .3);
  overflow: hidden;
}
.dlg-head { display: flex; align-items: center; height: 20px; padding: 0 0 0 4px; background: #f4f4f4; font-size: 9px; }
.dlg-head span { flex: 1; }
.dlg-head button { width: 36px; height: 20px; display: flex; align-items: center; justify-content: center; font-size: 11px; }
.x { width: 9px; height: 9px; }
.dlg-tabs { display: flex; align-items: flex-end; height: 26px; padding-left: 6px; }
.dlg-tabs button { height: 17px; width: 38px; background: #f3f3f3; border: 1px solid #e6e6e6; border-bottom: 0; text-align: left; padding-left: 4px; }
.dlg-tabs button:nth-child(n+3) { width: 49px; }
.dlg-tabs button:nth-child(4) { width: 46px; padding-left: 3px; }
.dlg-tabs .active { height: 19px; background: #fbfbfb; }
.dlg-page { display: flex; gap: 7px; margin: 0 4px 0 5px; padding: 4px 5px 4px 6px; background: #f9f9f9; }
.params-box { flex: 1; display: flex; height: 334px; overflow: hidden; border: 1px solid #b5b9bd; background: #fff; }
.params { flex: 1; height: 340px; }
.p-name { width: 207px; }
.params th { text-align: left; padding-left: 2px; height: 16px; border-right: 1px solid #e5e5e5; }
.params td { padding-left: 2px; border-right: 1px solid #dedede; line-height: 13px; }
.params td:first-child { padding-left: 0; }
.params tbody tr:nth-child(even) { background: #eaeaea; }
.ty { width: 13px; height: 13px; margin-right: 3px; vertical-align: -3px; }
.thumb-track.grey { background: #f0f0f0; }
.dlg-side { width: 96px; display: flex; flex-direction: column; justify-content: flex-end; gap: 10px; padding-bottom: 2px; }
.btn { height: 21px; background: #fdfdfd; border: 1px solid #dcdcdc; border-radius: 2px; }
.dlg-foot { display: flex; justify-content: flex-end; gap: 6px; padding: 0 5px 6px; }
.dlg-foot .btn { width: 69px; }
.dlg-foot .primary { border-color: #5ea8e8; }
```
